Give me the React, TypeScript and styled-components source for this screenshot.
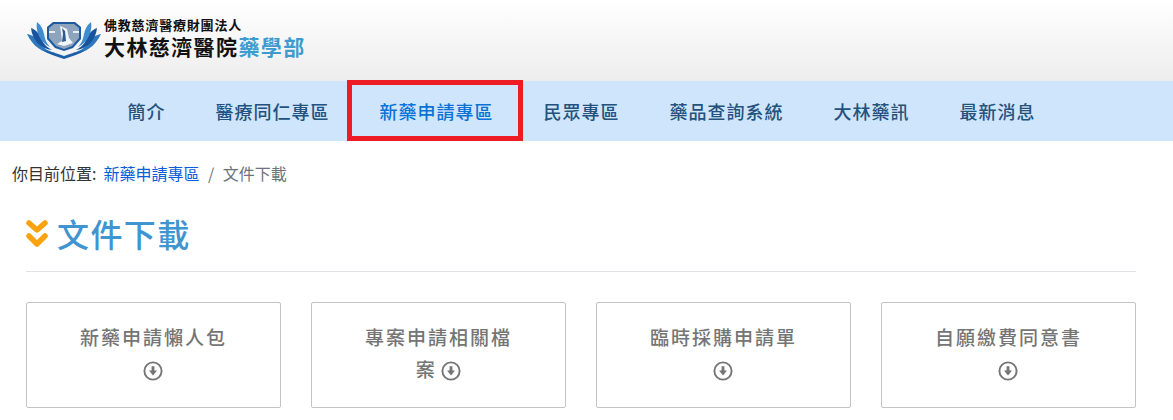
import React from 'react';
import styled, { createGlobalStyle } from 'styled-components';

const cjk = `"Noto Sans CJK TC", "Noto Sans", sans-serif`;

const GlobalStyle = createGlobalStyle`
  html, body {
    margin: 0;
    padding: 0;
    height: 420px;
    overflow: hidden;
    background: #fff;
    font-family: ${cjk};
  }
`;

const Header = styled.header`
  height: 81px;
  box-sizing: border-box;
  padding: 16px 0 0 27px;
  display: flex;
  align-items: flex-start;
  background: linear-gradient(to bottom, #ffffff 0%, #ededed 100%);
`;

const LogoText = styled.div`
  margin-left: 3px;
  display: flex;
  flex-direction: column;
  color: #111;
`;

const LogoSmall = styled.div`
  font-size: 13px;
  line-height: 18px;
  font-weight: 700;
  letter-spacing: 0.8px;
  white-space: nowrap;
`;

const LogoBig = styled.div`
  font-size: 21px;
  line-height: 24px;
  font-weight: 700;
  letter-spacing: 1.4px;
  white-space: nowrap;
`;

const LogoAccent = styled.span`
  color: #3d9bd0;
`;

const Nav = styled.nav`
  height: 60px;
  background: #cfe5fc;
  display: flex;
  justify-content: center;
  padding-right: 10px;
`;

const NavItem = styled.a<{ $active?: boolean }>`
  position: relative;
  box-sizing: border-box;
  height: 60px;
  padding: 0 25px;
  display: flex;
  align-items: center;
  font-size: 18px;
  font-weight: 500;
  letter-spacing: 1px;
  white-space: nowrap;
  color: ${({ $active }) => ($active ? '#0b72d6' : '#24527e')};
  ${({ $active }) =>
    $active &&
    `
    &::after {
      content: '';
      position: absolute;
      top: -1px;
      bottom: 0;
      left: -8px;
      right: -4px;
      border: 5px solid #ed1c24;
    }
  `}
`;

const Crumbs = styled.div`
  height: 22px;
  margin-top: 21px;
  padding-left: 12px;
  display: flex;
  align-items: center;
  font-size: 16px;
  color: #333;
  white-space: nowrap;
`;

const CrumbLink = styled.a`
  margin-left: 7px;
  color: #0b5ed7;
`;

const CrumbSep = styled.span`
  margin: 0 8.5px;
  color: #6c757d;
`;

const CrumbCurrent = styled.span`
  color: #6c757d;
`;

const Content = styled.main`
  margin: 0 37px 0 26px;
`;

const TitleRow = styled.div`
  box-sizing: border-box;
  height: 73px;
  margin-top: 15px;
  padding-bottom: 5px;
  display: flex;
  align-items: center;
  gap: 9px;
  border-bottom: 1px solid #dee2e6;
`;

const Title = styled.h1`
  margin: 0;
  font-size: 32px;
  line-height: 44px;
  font-weight: 500;
  letter-spacing: 1.4px;
  color: #4094d0;
`;

const Cards = styled.div`
  margin-top: 30px;
  display: grid;
  grid-template-columns: repeat(4, 255px);
  justify-content: space-between;
`;

const Card = styled.a`
  box-sizing: border-box;
  height: 106px;
  padding: 18px 45px 0;
  border: 1px solid #c4c4c4;
  border-radius: 2px;
  background: #fff;
  text-align: center;
  font-size: 19px;
  font-weight: 500;
  line-height: 32px;
  letter-spacing: 2px;
  color: #757575;
`;

const DownIcon = styled.svg`
  width: 20px;
  height: 20px;
  margin-left: -2px;
  vertical-align: -4px;
`;

const LogoMark = styled.svg`
  flex: none;
  margin-top: 2px;
`;

const Petals = () => (
  <>
    <path d="M0 16c6 1 10 4 13 9 3 5 8 8 15 10-11 1-22-6-28-19z" fill="#2f78bd" />
    <path d="M4 10c5 2 8 5 10 10 2 5 5 9 11 12C14 31 5 22 4 10z" fill="#17549c" />
    <path d="M10 4c4 3 6 7 7 12 1 6 3 10 6 13C14 25 8 14 10 4z" fill="#3f8ccf" />
    <path d="M15 32c7 1 14 3 22 6v3C29 38 21 36 15 32z" fill="#1c5ea8" />
  </>
);

const Lotus = () => (
  <LogoMark width="74" height="42" viewBox="0 0 74 42">
    <Petals />
    <g transform="matrix(-1 0 0 1 74 0)">
      <Petals />
    </g>
    <path d="M26 4h22l6 5v12l-8 9-9 3-9-3-8-9V9z" fill="#1d5a9f" />
    <path d="M27 6h20l5 4v10l-7 8-8 3-8-3-7-8V10z" fill="#8ea4bd" />
    <path d="M33 8l7 3 2 9 4 5-9 3-7-2 5-3-1-8z" fill="#f2f5f8" />
    <path d="M35 10l3 3 1 10-4 1 1-8z" fill="#2a5b92" />
    <path d="M22 14h6M46 14h6" stroke="#e6ecf3" strokeWidth="2" />
  </LogoMark>
);

const Chevrons = () => (
  <svg width="22" height="29" viewBox="0 0 22 29" style={{ flex: 'none', marginTop: 1 }}>
    <g fill="none" stroke="#f9a30f" strokeWidth="5.5" strokeLinecap="round" strokeLinejoin="round">
      <path d="M3 4l8 7 8-7" />
      <path d="M3 17l8 8 8-8" />
    </g>
  </svg>
);

const Down = () => (
  <DownIcon viewBox="0 0 20 20">
    <circle cx="10" cy="10" r="8.6" fill="none" stroke="#757575" strokeWidth="1.9" />
    <path d="M8.6 5.2h2.8v4.4h2.6L10 14.6 6 9.6h2.6z" fill="#757575" />
  </DownIcon>
);

const navItems = ['簡介', '醫療同仁專區', '新藥申請專區', '民眾專區', '藥品查詢系統', '大林藥訊', '最新消息'];
const cards = ['新藥申請懶人包', '專案申請相關檔案', '臨時採購申請單', '自願繳費同意書'];

export default function App() {
  return (
    <>
      <GlobalStyle />
      <Header>
        <Lotus />
        <LogoText>
          <LogoSmall>佛教慈濟醫療財團法人</LogoSmall>
          <LogoBig>
            大林慈濟醫院<LogoAccent>藥學部</LogoAccent>
          </LogoBig>
        </LogoText>
      </Header>
      <Nav>
        {navItems.map((item) => (
          <NavItem key={item} $active={item === '新藥申請專區'}>
            {item}
          </NavItem>
        ))}
      </Nav>
      <Crumbs>
        你目前位置:
        <CrumbLink>新藥申請專區</CrumbLink>
        <CrumbSep>/</CrumbSep>
        <CrumbCurrent>文件下載</CrumbCurrent>
      </Crumbs>
      <Content>
        <TitleRow>
          <Chevrons />
          <Title>文件下載</Title>
        </TitleRow>
        <Cards>
          {cards.map((card) => (
            <Card key={card}>
              {card} <Down />
            </Card>
          ))}
        </Cards>
      </Content>
    </>
  );
}
